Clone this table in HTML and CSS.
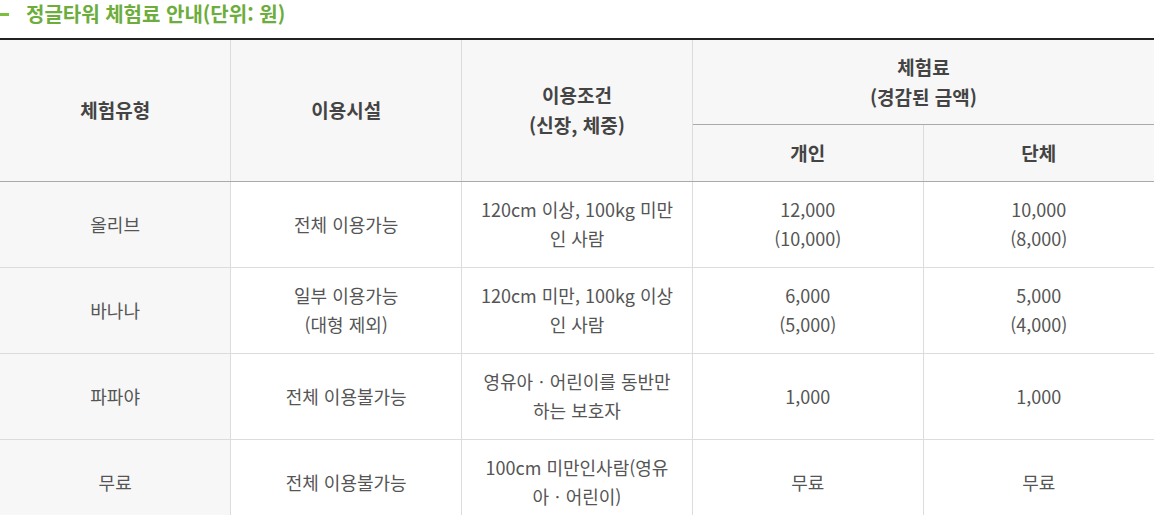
FILE: index.html
```html
<!DOCTYPE html>
<html lang="ko">
<head>
<meta charset="utf-8">
<link rel="stylesheet" href="styles.css">
</head>
<body>
<div class="wrap">
  <h3 class="title"><span class="dash"></span>정글타워 체험료 안내(단위: 원)</h3>
  <table class="fee">
    <colgroup>
      <col class="c"><col class="c"><col class="c"><col class="c"><col class="c">
    </colgroup>
    <thead>
      <tr class="h1">
        <th rowspan="2">체험유형</th>
        <th rowspan="2">이용시설</th>
        <th rowspan="2">이용조건<br>(신장, 체중)</th>
        <th colspan="2">체험료<br>(경감된 금액)</th>
      </tr>
      <tr class="h2">
        <th>개인</th>
        <th class="last">단체</th>
      </tr>
    </thead>
    <tbody>
      <tr>
        <td class="type">올리브</td>
        <td>전체 이용가능</td>
        <td>120cm 이상, 100kg 미만<br>인 사람</td>
        <td>12,000<br>(10,000)</td>
        <td class="last">10,000<br>(8,000)</td>
      </tr>
      <tr>
        <td class="type">바나나</td>
        <td>일부 이용가능<br>(대형 제외)</td>
        <td>120cm 미만, 100kg 이상<br>인 사람</td>
        <td>6,000<br>(5,000)</td>
        <td class="last">5,000<br>(4,000)</td>
      </tr>
      <tr>
        <td class="type">파파야</td>
        <td>전체 이용불가능</td>
        <td>영유아ㆍ어린이를 동반만<br>하는 보호자</td>
        <td>1,000</td>
        <td class="last">1,000</td>
      </tr>
      <tr>
        <td class="type">무료</td>
        <td>전체 이용불가능</td>
        <td>100cm 미만인사람(영유<br>아ㆍ어린이)</td>
        <td>무료</td>
        <td class="last">무료</td>
      </tr>
    </tbody>
  </table>
</div>
</body>
</html>
```

FILE: styles.css
```css
html, body {
  margin: 0;
  padding: 0;
  background: #fff;
}
body {
  font-family: "Noto Sans CJK KR", "Noto Sans", sans-serif;
  color: #555;
  overflow: hidden;
}
.wrap {
  width: 1154px;
}
.title {
  display: flex;
  align-items: center;
  gap: 17px;
  margin: 0;
  height: 28px;
  padding-bottom: 10px;
  font-size: 20px;
  font-weight: 700;
  color: #6cad3c;
  line-height: 28px;
}
.dash {
  display: block;
  width: 9px;
  height: 3px;
  background: #7cbf3f;
}
.fee {
  width: 1154px;
  border-collapse: collapse;
  table-layout: fixed;
  border-top: 2px solid #222;
  font-size: 18px;
  line-height: 29px;
}
.fee col.c {
  width: 20%;
}
.fee th, .fee td {
  text-align: center;
  vertical-align: middle;
  border-left: 1px solid #dcdcdc;
  border-right: 1px solid #dcdcdc;
  border-bottom: 1px solid #dcdcdc;
  padding: 0;
}
.fee th:first-child, .fee td:first-child {
  border-left: none;
}
.fee .last {
  border-right: none;
}
.fee th {
  background: #f7f7f7;
  color: #444;
  font-weight: 700;
  font-size: 19px;
  line-height: 30px;
}
.fee thead tr.h1 th[colspan] {
  border-bottom: 1px solid #aaa;
  border-right: none;
}
.fee thead tr.h1 th[rowspan] {
  border-bottom: 1px solid #aaa;
}
.fee thead tr.h2 th {
  border-bottom: 1px solid #aaa;
}
.fee tr.h1 {
  height: 85px;
}
.fee tr.h2 {
  height: 57px;
}
.fee tbody tr {
  height: 86px;
}
.fee td.type {
  background: #f7f7f7;
}
```
